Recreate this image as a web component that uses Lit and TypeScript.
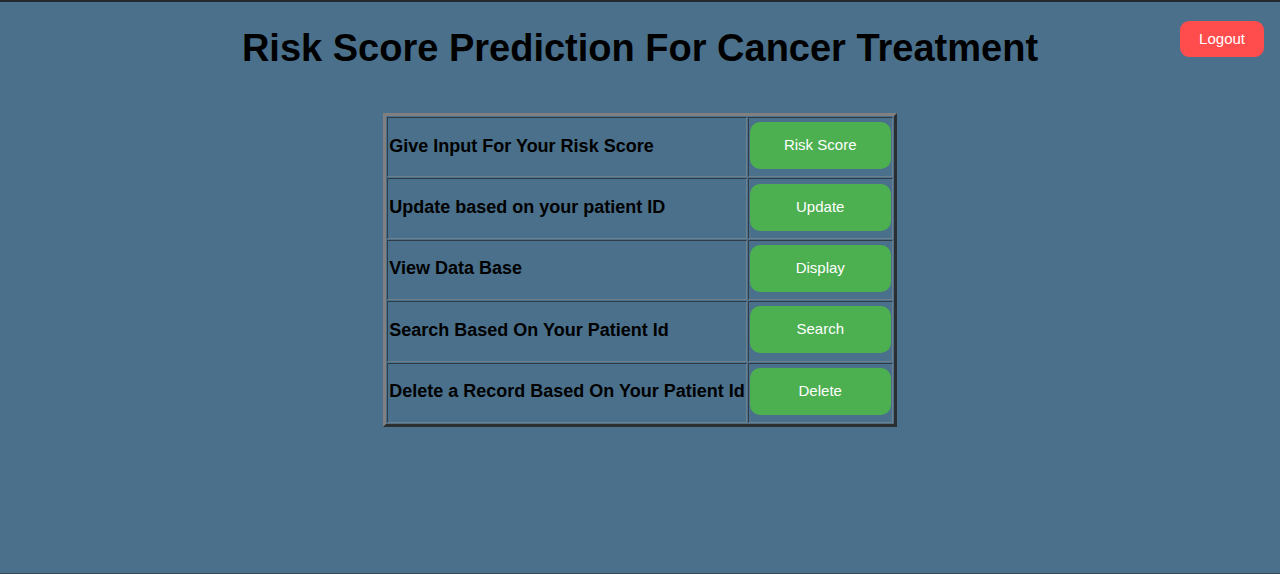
import { LitElement, html, css } from "lit";
import { customElement } from "lit/decorators.js";

const ACTIONS = [
  { id: "risk", label: "Give Input For Your Risk Score", action: "Risk Score" },
  { id: "update", label: "Update based on your patient ID", action: "Update" },
  { id: "display", label: "View Data Base", action: "Display" },
  { id: "search", label: "Search Based On Your Patient Id", action: "Search" },
  { id: "delete", label: "Delete a Record Based On Your Patient Id", action: "Delete" },
];

@customElement("app-root")
export class AppRoot extends LitElement {
  static styles = css`
    :host {
      display: flex;
      flex-direction: column;
      box-sizing: border-box;
      min-height: 100vh;
      background: #4a708b;
      border-top: 2px solid #23292e;
      border-bottom: 1px solid #3d4856;
      color: #000;
      font-family: Arial, "Liberation Sans", sans-serif;
    }
    .top {
      display: grid;
      grid-template-columns: 1fr auto 1fr;
      align-items: start;
      padding: 19px 16px 0;
    }
    .title {
      grid-column: 2;
      margin: 4px 0 0;
      font-size: 38px;
      line-height: 46px;
      font-weight: bold;
      white-space: nowrap;
    }
    .logout {
      justify-self: end;
      height: 36px;
      padding: 0 19px 2px;
      border: 0;
      border-radius: 9px;
      background: #ff4c4c;
      color: #fff;
      font: 15px "Liberation Sans", Arial, sans-serif;
      cursor: pointer;
    }
    .menu {
      margin: 42px auto 0;
      height: 314px;
      border: 3px solid;
      border-color: #808080 #2b2f32 #2b2f32 #808080;
      border-spacing: 1px;
      border-collapse: separate;
    }
    .cell {
      padding: 1px 1px 4px;
      border: 1px solid;
      border-color: #2f3c47 #70808a #70808a #2f3c47;
      text-align: left;
      font-size: 18px;
      line-height: 22px;
      font-weight: bold;
      white-space: nowrap;
    }
    .go {
      display: block;
      width: 141px;
      height: 47px;
      padding: 0 0 2px;
      border: 0;
      border-radius: 10px;
      background: #4caf50;
      color: #fff;
      font: 15px "Liberation Sans", Arial, sans-serif;
      cursor: pointer;
    }
  `;

  render() {
    return html`
      <header class="top">
        <h1 class="title">Risk Score Prediction For Cancer Treatment</h1>
        <button class="logout" type="button">Logout</button>
      </header>
      <main>
        <table class="menu">
          <tbody>
            ${ACTIONS.map(
              (a) => html`<tr>
                <th class="cell" scope="row" id=${a.id}>${a.label}</th>
                <td class="cell">
                  <button class="go" type="button" aria-describedby=${a.id}>${a.action}</button>
                </td>
              </tr>`
            )}
          </tbody>
        </table>
      </main>
    `;
  }
}
